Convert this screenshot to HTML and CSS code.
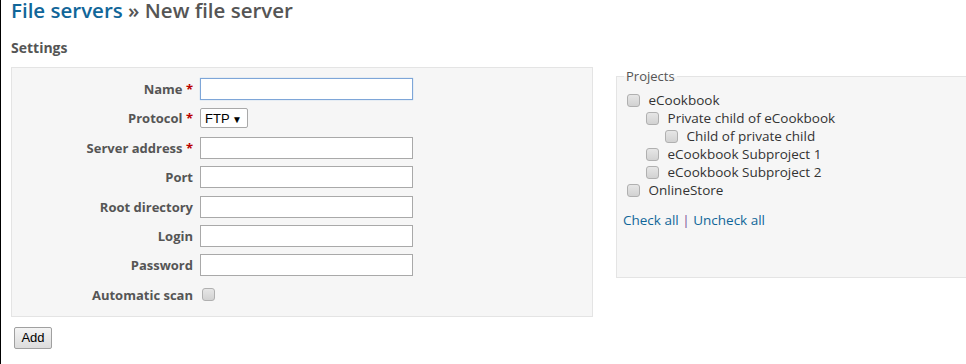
FILE: index.html
```html
<!DOCTYPE html>
<html lang="en">
<head>
    <meta charset="UTF-8">
    <title>New file server</title>
    <link rel="stylesheet" href="styles.css">
</head>
<body>
    <div class="content">
        <h2><a href="#">File servers</a> &raquo; New file server</h2>
        <h3>Settings</h3>
        <div class="split">
            <div class="box tabular">
                <p class="row">
                    <label>Name <span class="required">*</span></label>
                    <input type="text" class="focused">
                </p>
                <p class="row">
                    <label>Protocol <span class="required">*</span></label>
                    <span class="select"><select><option>FTP</option></select></span>
                </p>
                <p class="row">
                    <label>Server address <span class="required">*</span></label>
                    <input type="text">
                </p>
                <p class="row">
                    <label>Port</label>
                    <input type="text">
                </p>
                <p class="row">
                    <label>Root directory</label>
                    <input type="text">
                </p>
                <p class="row">
                    <label>Login</label>
                    <input type="text">
                </p>
                <p class="row">
                    <label>Password</label>
                    <input type="password">
                </p>
                <p class="row">
                    <label>Automatic scan</label>
                    <input type="checkbox" class="check">
                </p>
            </div>
            <fieldset class="box projects">
                <legend>Projects</legend>
                <ul class="tree">
                    <li><input type="checkbox" class="check"> eCookbook
                        <ul>
                            <li><input type="checkbox" class="check"> Private child of eCookbook
                                <ul>
                                    <li><input type="checkbox" class="check"> Child of private child</li>
                                </ul>
                            </li>
                            <li><input type="checkbox" class="check"> eCookbook Subproject 1</li>
                            <li><input type="checkbox" class="check"> eCookbook Subproject 2</li>
                        </ul>
                    </li>
                    <li><input type="checkbox" class="check"> OnlineStore</li>
                </ul>
                <p class="toggle"><a href="#">Check all</a> | <a href="#">Uncheck all</a></p>
            </fieldset>
        </div>
        <button class="add">Add</button>
    </div>
</body>
</html>
```

FILE: styles.css
```css
html {
    overflow: hidden;
}
body {
    margin: 0;
    padding: 0;
    border-left: 1px solid #000;
    min-height: 364px;
    font-family: "Open Sans", "Noto Sans", sans-serif;
    font-size: 13px;
    color: #333;
    background: #fff;
}
a {
    color: #169;
    text-decoration: none;
}
.content {
    padding: 0 0 0 10px;
}
h2 {
    margin: 0;
    font-size: 20.5px;
    font-weight: 600;
    color: #555;
    line-height: 20px;
}
h3 {
    margin: 19px 0 10px 0;
    font-size: 14px;
    font-weight: bold;
    color: #555;
    line-height: 18px;
}
.split {
    display: flex;
    align-items: flex-start;
}
.box {
    background: #f6f6f6;
    border: 1px solid #e4e4e4;
    flex-shrink: 0;
}
.tabular {
    width: 580px;
    padding: 10px 0 10px 0;
}
.row {
    display: flex;
    align-items: center;
    margin: 0 0 7.4px 0;
    height: 22px;
}
.row:last-child {
    margin-bottom: 0;
}
.row label {
    width: 181px;
    text-align: right;
    padding-right: 7px;
    font-weight: bold;
    font-size: 13px;
    color: #555;
}
.required {
    color: #bb0000;
}
.row input[type=text], .row input[type=password] {
    width: 213px;
    height: 22px;
    box-sizing: border-box;
    border: 1px solid #a9a9a9;
    background: #fff;
    margin: 0;
    padding: 0 3px;
}
.row input.focused {
    border-color: #7ea6d8;
    box-shadow: 0 0 1px #9cc0ea;
}
.select {
    position: relative;
    display: inline-block;
}
.select select {
    appearance: none;
    -webkit-appearance: none;
    width: 48px;
    height: 20px;
    border: 1px solid #a9a9a9;
    border-radius: 2px;
    background: #fff;
    font-family: "Liberation Sans", Arial, sans-serif;
    font-size: 13px;
    color: #000;
    padding: 0 0 0 4px;
    margin: 0;
}
.select::after {
    content: "\25BC";
    position: absolute;
    right: 6px;
    top: 4px;
    font-size: 10px;
    color: #000;
    pointer-events: none;
}
.check {
    appearance: none;
    -webkit-appearance: none;
    width: 13px;
    height: 13px;
    margin: 0;
    border: 1px solid #b0b0b0;
    border-radius: 3px;
    background: linear-gradient(#e6e6e6, #d2d2d2);
    vertical-align: -2px;
}
.row .check {
    margin-left: 2px;
}
.projects {
    margin: 0 0 0 23px;
    padding: 0 0 0 6px;
    width: 380px;
    height: 211px;
    box-sizing: border-box;
}
.projects legend {
    padding: 0 2px;
    color: #555;
    font-size: 13px;
    margin-left: 1px;
}
.tree, .tree ul {
    list-style: none;
    margin: 0;
    padding: 0;
}
.tree {
    margin-top: 6px;
    padding-left: 4px;
}
.tree ul {
    padding-left: 19px;
}
.tree li {
    line-height: 18px;
    font-size: 13.5px;
    color: #333;
}
.tree li .check {
    margin-right: 5px;
}
.toggle {
    margin: 12px 0 0 0;
    font-size: 13.5px;
    color: #7a4f99;
}
.add {
    margin: 10px 0 0 3px;
    width: 38px;
    height: 22px;
    font-family: "Liberation Sans", Arial, sans-serif;
    font-size: 13px;
    color: #000;
    background: linear-gradient(#f4f4f4, #dcdcdc);
    border: 1px solid #a0a0a0;
    border-radius: 2px;
    padding: 0;
}
```
